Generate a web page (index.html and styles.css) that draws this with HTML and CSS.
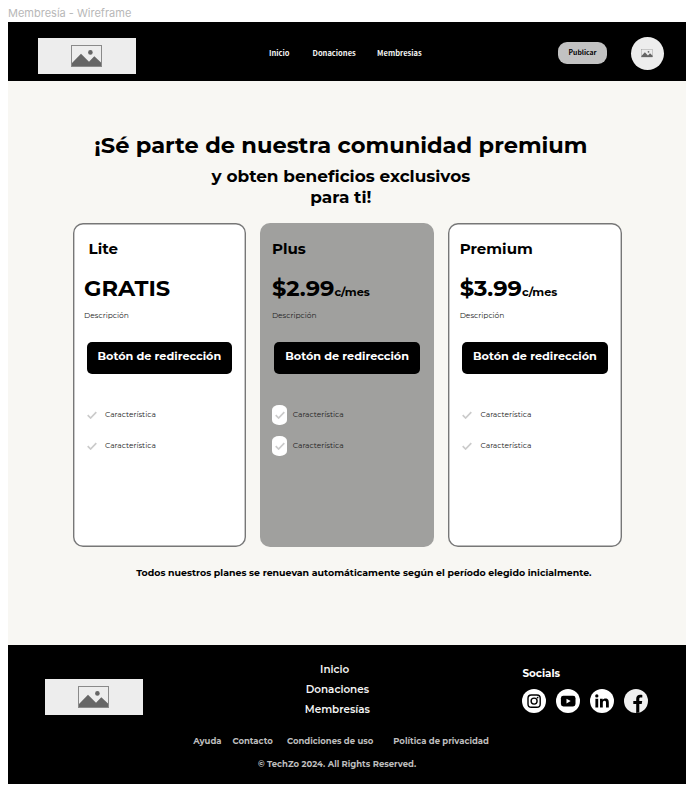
FILE: index.html
```html
<!DOCTYPE html>
<html lang="es">
<head>
<meta charset="utf-8">
<title>Membresía - Wireframe</title>
<link rel="stylesheet" href="styles.css">
</head>
<body>
<svg class="defs" aria-hidden="true">
  <symbol id="picture" viewBox="0 0 31 22">
    <rect x=".5" y=".5" width="30" height="21" fill="none" stroke="#8a8a8a"/>
    <path d="M1 18 10 8.7l8 8 5.3-5.4L30 17.6V21H1z" fill="#666"/>
    <circle cx="19.4" cy="7.4" r="2.3" fill="#666"/>
  </symbol>
  <symbol id="check" viewBox="0 0 10 8">
    <path d="M.7 4.2 3.6 7 9.3 1.2" fill="none" stroke="#cbcbcb" stroke-width="1.7"/>
  </symbol>
</svg>
<p class="frame-label">Membresía - Wireframe</p>
<div class="frame">
  <header class="header">
    <div class="logo"><svg class="logo-icon"><use href="#picture"/></svg></div>
    <nav class="header-nav"><a>Inicio</a><a>Donaciones</a><a>Membresias</a></nav>
    <button class="publish">Publicar</button>
    <div class="avatar"><svg class="avatar-icon"><use href="#picture"/></svg></div>
  </header>

  <main class="main">
    <h1 class="title">¡Sé parte de nuestra comunidad premium</h1>
    <p class="subtitle">y obten beneficios exclusivos<br>para ti!</p>
    <div class="plans">
      <section class="plan plan-lite">
        <h2 class="plan-name">Lite</h2>
        <p class="price">GRATIS</p>
        <p class="description">Descripción</p>
        <button class="cta">Botón de redirección</button>
        <ul class="features">
          <li><span class="tick"><svg><use href="#check"/></svg></span>Característica</li>
          <li><span class="tick"><svg><use href="#check"/></svg></span>Característica</li>
        </ul>
      </section>
      <section class="plan plan-plus">
        <h2 class="plan-name">Plus</h2>
        <p class="price">$2.99<small>c/mes</small></p>
        <p class="description">Descripción</p>
        <button class="cta">Botón de redirección</button>
        <ul class="features">
          <li><span class="tick"><svg><use href="#check"/></svg></span>Característica</li>
          <li><span class="tick"><svg><use href="#check"/></svg></span>Característica</li>
        </ul>
      </section>
      <section class="plan">
        <h2 class="plan-name">Premium</h2>
        <p class="price">$3.99<small>c/mes</small></p>
        <p class="description">Descripción</p>
        <button class="cta">Botón de redirección</button>
        <ul class="features">
          <li><span class="tick"><svg><use href="#check"/></svg></span>Característica</li>
          <li><span class="tick"><svg><use href="#check"/></svg></span>Característica</li>
        </ul>
      </section>
    </div>
    <p class="note">Todos nuestros planes se renuevan automáticamente según el período elegido inicialmente.</p>
  </main>

  <footer class="footer">
    <div class="footer-top">
      <div class="logo"><svg class="logo-icon"><use href="#picture"/></svg></div>
      <nav class="footer-nav"><a class="home">Inicio</a><a>Donaciones</a><a>Membresías</a></nav>
      <div class="socials">
        <h3>Socials</h3>
        <div class="social-icons">
          <svg viewBox="0 0 24 24"><circle cx="12" cy="12" r="12" fill="#fff"/><g fill="none" stroke="#000" stroke-width="1.4"><rect x="6" y="6" width="12.2" height="12.2" rx="3.3"/><circle cx="12.1" cy="12.1" r="3"/></g><circle cx="15.6" cy="8.6" r=".9"/></svg>
          <svg viewBox="0 0 24 24"><circle cx="12" cy="12" r="12" fill="#fff"/><rect x="4.9" y="6.8" width="14.6" height="10.6" rx="2.4"/><path d="m10.5 9.7 4.2 2.4-4.2 2.4z" fill="#fff"/></svg>
          <svg viewBox="0 0 24 24"><circle cx="12" cy="12" r="12" fill="#fff"/><circle cx="6.8" cy="6.9" r="1.65"/><path d="M5.4 9.7h2.8v8.8H5.4zM10 9.7h2.7v1.2c.5-.8 1.4-1.4 2.7-1.4 2.8 0 3.4 1.8 3.4 4.2v4.8H16v-4.3c0-1.1 0-2.4-1.5-2.4s-1.7 1.2-1.7 2.3v4.4H10z"/></svg>
          <svg viewBox="0 0 24 24"><circle cx="12" cy="12" r="12" fill="#f0f0f0"/><path d="M12.2 24v-9.1H9.3v-3h2.9V9.8c0-2.7 1.6-4.1 4-4.1.9 0 1.7.1 2.1.2v2.7h-1.5c-1.3 0-1.5.7-1.5 1.6v1.7h2.9l-.5 3h-2.4v8.7z"/></svg>
        </div>
      </div>
    </div>
    <nav class="legal"><a>Ayuda</a><a>Contacto</a><a>Condiciones de uso</a><a>Política de privacidad</a></nav>
    <p class="copyright">© TechZo 2024. All Rights Reserved.</p>
  </footer>
</div>
</body>
</html>
```
FILE: styles.css
```css
* { box-sizing: border-box; margin: 0; padding: 0; }
body { width: 691px; height: 793px; background: #fff; color: #000; font-family: Montserrat, Inter, sans-serif; overflow: hidden; }
.defs { display: none; }
button { border: 0; font-family: inherit; }
ul { list-style: none; }

.frame-label { height: 21.5px; padding: 6px 0 0 8px; font: 400 11px/14px Inter, sans-serif; color: #b8b8b8; }
.frame { width: 677.7px; height: 762px; margin-left: 8.3px; display: flex; flex-direction: column; background: #f8f7f3; }

.header { display: flex; height: 59.5px; flex: none; background: #000; }
.logo { display: flex; align-items: center; justify-content: center; width: 97.3px; height: 36px; background: #ededed; }
.logo-icon { display: block; width: 31px; height: 22px; }
.header .logo { margin: 16px 0 0 30px; }
.header-nav { display: flex; margin: 25.5px 0 0 133.4px; font: 700 7.52px/12px "Noto Sans CJK JP", sans-serif; color: #f2f2f2; }
.header-nav a { white-space: nowrap; }
.header-nav a + a { margin-left: 23px; }
.header-nav a:last-child { margin-left: 21.4px; }
.publish { width: 49.3px; height: 21.6px; margin: 20.7px 23.8px 0 auto; border-radius: 9px; background: #c2c2c2; font: 700 6.8px/21px "Noto Sans CJK JP", sans-serif; color: #000; }
.avatar { display: flex; align-items: center; justify-content: center; width: 33px; height: 33px; margin: 15.5px 22px 0 0; border-radius: 50%; background: #ededed; }
.avatar-icon { width: 12px; height: 8.5px; }

.main { flex: 1; padding: 49.5px 0 0 64.3px; }
.title { width: 536.6px; font-size: 22.56px; line-height: 28px; font-weight: 700; text-align: center; white-space: nowrap; }
.subtitle { width: 536.6px; margin-top: 7.5px; font-size: 16.9px; line-height: 20.7px; font-weight: 700; text-align: center; }
.plans { display: flex; gap: 14.2px; margin-top: 16px; }
.plan { width: 173.6px; height: 324px; padding: 16.2px 0 0 11.5px; border-radius: 10px; background: #fff; box-shadow: inset 0 0 0 1.4px #777; }
.plan-plus { background: #a0a09e; box-shadow: none; }
.plan-name { font-size: 15.04px; line-height: 18.3px; font-weight: 700; }
.plan-lite .plan-name { padding-left: 4.5px; }
.price { margin-top: 17.3px; font-size: 22.56px; line-height: 27.4px; font-weight: 700; }
.price small { font-size: 11.3px; line-height: 1; }
.description { margin-top: 8.7px; font-size: 7.52px; line-height: 9.2px; color: #222; }
.cta { display: block; width: 145.5px; height: 32.4px; margin: 21.1px 0 0 2.5px; padding-bottom: 4px; border-radius: 5px; background: #000; color: #fff; font-size: 11.28px; font-weight: 700; white-space: nowrap; }
.features { display: flex; flex-direction: column; gap: 11px; margin-top: 31.1px; }
.features li { display: flex; align-items: center; gap: 5.3px; height: 20px; padding-bottom: 1.4px; font-size: 7.52px; color: #222; }
.tick { display: flex; align-items: center; justify-content: center; width: 15.5px; height: 20px; margin-bottom: -1.4px; border-radius: 7px / 5px; background: #fff; }
.tick svg { width: 10px; height: 8px; }
.note { margin: 19.6px 0 0 63.7px; font-size: 9.42px; line-height: 11.5px; font-weight: 700; white-space: nowrap; }

.footer { height: 138.7px; flex: none; background: #000; }
.footer-top { display: flex; height: 91px; }
.footer-top .logo { margin: 34px 0 0 37px; }
.footer-nav { display: flex; flex-direction: column; width: 100px; margin: 14.8px 0 0 144.8px; font-size: 10.4px; line-height: 20.2px; font-weight: 600; text-align: center; color: #f4f4f4; }
.footer-nav .home { padding-right: 5.5px; }
.socials { margin: 22.6px 0 0 135px; color: #fff; }
.socials h3 { font-size: 10.4px; line-height: 13px; font-weight: 700; }
.social-icons { display: flex; gap: 10px; margin-top: 8.4px; }
.social-icons svg { width: 24px; height: 24px; }
.legal { display: flex; margin-left: 185px; font-size: 8.46px; line-height: 11px; font-weight: 700; color: #bdbdbd; white-space: nowrap; }
.legal a:nth-child(2) { margin-left: 11px; }
.legal a:nth-child(3) { margin-left: 14.2px; }
.legal a:nth-child(4) { margin-left: 20px; }
.copyright { margin: 12px 0 0 249.7px; font-size: 8.46px; line-height: 11px; font-weight: 700; color: #bdbdbd; }
```
